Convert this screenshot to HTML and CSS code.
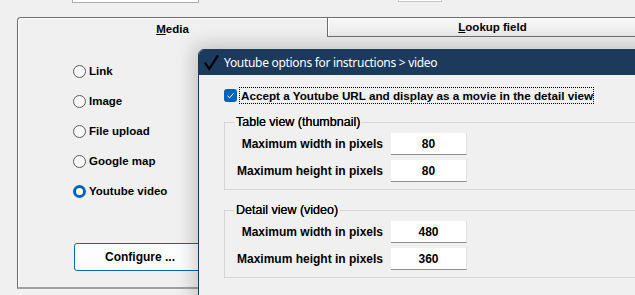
FILE: index.html
```html
<!DOCTYPE html>
<html>
<head>
<meta charset="utf-8">
<link rel="stylesheet" href="styles.css">
</head>
<body>
<div class="screen">
  <div class="topbar">
    <div class="stub stub-a"></div>
    <div class="stub stub-b"></div>
  </div>
  <div class="tabs">
    <div class="tabstrip">
      <div class="tab tab-active"><span><u>M</u>edia</span></div>
      <div class="tab tab-idle"><span><u>L</u>ookup field</span></div>
    </div>
    <div class="panel">
      <div class="radios">
        <div class="radio"><span class="circle"></span>Link</div>
        <div class="radio"><span class="circle"></span>Image</div>
        <div class="radio"><span class="circle"></span>File upload</div>
        <div class="radio"><span class="circle"></span>Google map</div>
        <div class="radio"><span class="circle checked"></span>Youtube video</div>
      </div>
      <div class="btn">Configure ...</div>
    </div>
  </div>

  <div class="dialog">
    <div class="titlebar">
      <svg class="ticon" width="15" height="16" viewBox="0 0 15 16"><path d="M1.5 8.5 L5.2 13.8 L13.5 1.2" fill="none" stroke="#000" stroke-width="2.1" stroke-linecap="square"/></svg>
      <span class="title">Youtube options for instructions &gt; video</span>
    </div>
    <div class="dbody">
      <div class="checkrow">
        <span class="checkbox"><svg width="13" height="13" viewBox="0 0 13 13"><path d="M3.5 6.8 L5.6 8.8 L9.6 4.3" fill="none" stroke="#fff" stroke-width="1"/></svg></span>
        <span class="focus">Accept a Youtube URL and display as a movie in the detail view</span>
      </div>
      <fieldset class="group g1">
        <legend>Table view (thumbnail)</legend>
        <div class="rows">
          <div class="lbl">Maximum width in pixels</div><div class="inp">80</div>
          <div class="lbl">Maximum height in pixels</div><div class="inp">80</div>
        </div>
      </fieldset>
      <fieldset class="group g2">
        <legend>Detail view (video)</legend>
        <div class="rows">
          <div class="lbl">Maximum width in pixels</div><div class="inp">480</div>
          <div class="lbl">Maximum height in pixels</div><div class="inp">360</div>
        </div>
      </fieldset>
    </div>
  </div>
</div>
</body>
</html>
```

FILE: styles.css
```css
* { box-sizing: border-box; }
html, body { margin: 0; padding: 0; }
body {
  background: #f0f0f0;
  width: 635px;
  height: 295px;
  overflow: hidden;
  font-family: "Liberation Sans", Arial, sans-serif;
  color: #000;
}
.screen { position: relative; width: 635px; height: 295px; overflow: hidden; }

.topbar { display: flex; height: 3px; }
.stub { background: #fff; border: 1px solid #adadad; border-top: none; height: 3px; flex: none; }
.stub-a { margin-left: 72px; width: 127px; }
.stub-b { margin-left: 199px; width: 44px; height: 2px; border-color: #c8c8c8; }

.tabs { margin: 14px 0 0 17px; width: 640px; }
.tabstrip { display: flex; height: 20px; }
.tab {
  font-weight: bold;
  font-size: 11.5px;
  display: flex;
  align-items: center;
  justify-content: center;
}
.tab span { display: block; }
.tab-active {
  width: 310px;
  border-top: 1px solid #6d6d6d;
  border-left: 1px solid #6d6d6d;
  border-top-left-radius: 4px;
  box-shadow: inset 1px 1px 0 #fff;
  padding-top: 2px;
}
.tab-idle {
  flex: 1;
  border: 1px solid #6d6d6d;
  border-right: none;
  background: linear-gradient(#f7f7f7, #ececec);
  box-shadow: inset 1px 1px 0 #fff;
}
.panel {
  height: 252px;
  border-left: 1px solid #6d6d6d;
  border-bottom: 2px solid #a0a0a0;
  box-shadow: inset 1px 0 0 #fff;
  padding: 19px 0 0 55px;
}
.radios { display: flex; flex-direction: column; }
.radio {
  height: 30px;
  display: flex;
  align-items: center;
  font-weight: bold;
  font-size: 11.5px;
  transform: translateY(-15px);
  margin-top: 15px;
}
.radios .radio + .radio { margin-top: 0; }
.circle {
  width: 13px; height: 13px;
  border-radius: 50%;
  border: 1px solid #5a5a5a;
  background: #f7f7f7;
  margin-right: 3px;
  flex: none;
}
.circle.checked {
  border: 3.5px solid #0062b8;
  background: #fff;
}
.btn {
  margin: 22px 0 0 1px;
  width: 132px;
  height: 28px;
  border: 1px solid #0067c0;
  border-radius: 3px;
  background: #fdfdfd;
  font-size: 12px;
  font-weight: bold;
  display: flex;
  align-items: center;
  justify-content: center;
}

.dialog {
  position: absolute;
  left: 198px;
  top: 49px;
  width: 470px;
  height: 260px;
  border: 1px solid #1c3a5c;
  border-radius: 6px 6px 0 0;
  background: #f0f0f0;
  box-shadow: 0 0 18px 5px rgba(0,0,0,0.18);
}
.titlebar {
  height: 25px;
  background: #1c3a5c;
  border-radius: 5px 5px 0 0;
  display: flex;
  align-items: center;
  padding-left: 5px;
}
.ticon { flex: none; margin-top: 1px; }
.title {
  color: #fff;
  font-family: "Noto Sans", "Open Sans", sans-serif;
  font-size: 12px;
  letter-spacing: -0.3px;
  margin-left: 5px;
}
.dbody { padding: 12px 0 0 25px; }
.checkrow { display: flex; align-items: center; height: 17px; }
.checkbox {
  width: 13px; height: 13px;
  background: #0062b8;
  border-radius: 3px;
  display: block;
  margin-right: 2px;
  flex: none;
}
.checkbox svg { display: block; }
.focus {
  font-weight: bold;
  font-size: 11.7px;
  border: 1px dotted #000;
  padding: 1px 0 1px 1px;
  line-height: 13px;
}
.group {
  margin: 11px 0 0 0;
  width: 430px;
  border: 1px solid #d5d5d5;
  padding: 4px 0 7px 9px;
}
.g2 { margin-top: 13px; }
legend {
  padding: 0 2px;
  font-size: 12.5px;
  line-height: 14px;
  text-shadow: 0 0 0.3px #000;
}
.rows {
  display: grid;
  grid-template-columns: 149px 76px;
  column-gap: 8px;
  row-gap: 5px;
}
.lbl {
  font-weight: bold;
  font-size: 12px;
  text-align: right;
  display: flex;
  align-items: center;
  justify-content: flex-end;
}
.inp {
  height: 22px;
  background: #fff;
  border-bottom: 1px solid #8c8c8c;
  border-right: 1px solid #e0e0e0;
  font-weight: bold;
  font-size: 12px;
  display: flex;
  align-items: center;
  justify-content: center;
}
```
